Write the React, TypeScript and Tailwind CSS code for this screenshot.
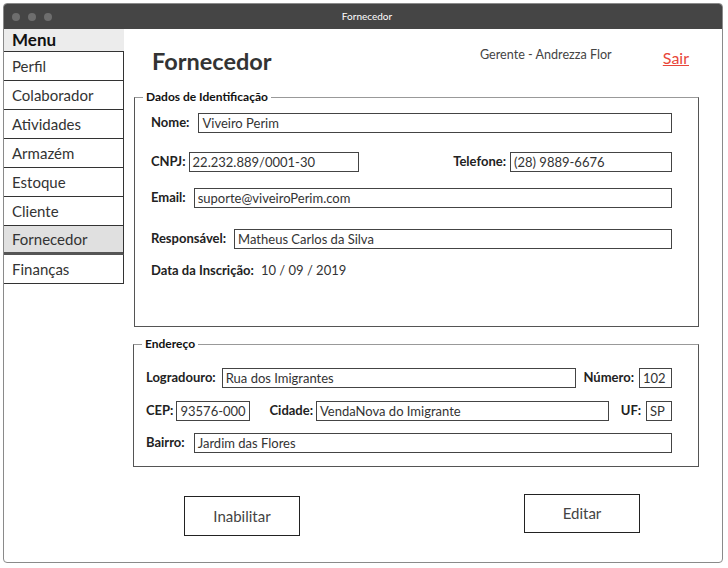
import React from 'react';

const menuItems = ['Perfil', 'Colaborador', 'Atividades', 'Armazém', 'Estoque', 'Cliente', 'Fornecedor', 'Finanças'];

const Field: React.FC<{ value: string; className?: string }> = ({ value, className = '' }) => (
  <div className={`h-[20px] border border-[#444] px-[3px] text-[13px] leading-[18px] text-[#333] whitespace-nowrap overflow-hidden ${className}`}>
    {value}
  </div>
);

const Label: React.FC<{ children: React.ReactNode; className?: string }> = ({ children, className = '' }) => (
  <span className={`text-[13px] font-bold text-[#222] whitespace-nowrap ${className}`}>{children}</span>
);

export default function App() {
  return (
    <div className="w-[728px] h-[568px] bg-white p-[3px]" style={{ fontFamily: 'Lato, "Open Sans", sans-serif' }}>
      <div className="w-[720px] h-[560px] border border-[#8a8a8a] rounded-[4px] overflow-hidden flex flex-col">
        {/* title bar */}
        <div className="h-[25px] bg-[#454545] flex items-center shrink-0">
          <div className="flex gap-[8px] pl-[8px]">
            <span className="w-[8px] h-[8px] rounded-full bg-[#6e6e6e]" />
            <span className="w-[8px] h-[8px] rounded-full bg-[#6e6e6e]" />
            <span className="w-[8px] h-[8px] rounded-full bg-[#6e6e6e]" />
          </div>
          <span className="flex-1 text-center text-white text-[10px] pr-[40px]">Fornecedor</span>
        </div>

        <div className="flex flex-1">
          {/* sidebar */}
          <div className="w-[120px] shrink-0">
            <div className="h-[22px] bg-[#ececec] pl-[8px] text-[17px] font-bold text-[#111] leading-[22px]">Menu</div>
            <div className="border-t border-[#333]">
              {menuItems.map((item) => (
                <div
                  key={item}
                  className={
                    item === 'Fornecedor'
                      ? 'h-[29px] pl-[8px] text-[15px] leading-[26px] text-[#333] bg-[#e0e0e0] border-r border-[#333] border-b-[3px] border-b-[#555]'
                      : 'h-[29px] pl-[8px] text-[15px] leading-[28px] text-[#333] border-r border-b border-[#333]'
                  }
                >
                  {item}
                </div>
              ))}
            </div>
          </div>

          {/* main */}
          <div className="flex-1 flex flex-col">
            <div className="flex items-start pt-[17px] h-[59px]">
              <h1 className="w-[356px] pl-[28px] text-[23.5px] font-bold text-[#333] leading-[30px]">Fornecedor</h1>
              <span className="text-[12.6px] text-[#444]">Gerente - Andrezza Flor</span>
              <span className="ml-auto mr-[33px] text-[16px] text-[#e8463a] underline">Sair</span>
            </div>

            {/* Dados de Identificação */}
            <fieldset className="ml-[10px] mr-[23px] h-[239px] border border-[#555] border-t-[#999] pl-[16px] pr-[26px]">
              <legend className="ml-[-8px] px-[3px] text-[12px] font-bold text-[#111]">Dados de Identificação</legend>
              <div className="flex items-center mt-[7px]">
                <Label>Nome:</Label>
                <Field value="Viveiro Perim" className="flex-1 ml-[9px]" />
              </div>
              <div className="flex items-center justify-between mt-[19px]">
                <div className="flex items-center">
                  <Label>CNPJ:</Label>
                  <Field value="22.232.889/0001-30" className="w-[170px] ml-[3px]" />
                </div>
                <div className="flex items-center">
                  <Label>Telefone:</Label>
                  <Field value="(28) 9889-6676" className="w-[162px] ml-[4px]" />
                </div>
              </div>
              <div className="flex items-center mt-[16px]">
                <Label>Email:</Label>
                <Field value="suporte@viveiroPerim.com" className="flex-1 ml-[8px]" />
              </div>
              <div className="flex items-center mt-[21px]">
                <Label>Responsável:</Label>
                <Field value="Matheus Carlos da Silva" className="flex-1 ml-[8px]" />
              </div>
              <div className="flex items-center mt-[12px]">
                <Label>Data da Inscrição:</Label>
                <span className="ml-[7px] text-[13px] text-[#333]">10 / 09 / 2019</span>
              </div>
            </fieldset>

            {/* Endereço */}
            <fieldset className="ml-[9px] mr-[23px] mt-[8px] h-[132px] border border-[#555] border-t-[#999] pl-[12px] pr-[26px]">
              <legend className="ml-[-4px] px-[3px] text-[12px] font-bold text-[#111]">Endereço</legend>
              <div className="flex items-center mt-[15px]">
                <Label>Logradouro:</Label>
                <Field value="Rua dos Imigrantes" className="flex-1 ml-[6px]" />
                <Label className="ml-[7px]">Número:</Label>
                <Field value="102" className="w-[33px] ml-[5px]" />
              </div>
              <div className="flex items-center mt-[13px]">
                <Label>CEP:</Label>
                <Field value="93576-000" className="w-[74px] ml-[3px]" />
                <Label className="ml-[19px]">Cidade:</Label>
                <Field value="VendaNova do Imigrante" className="flex-1 ml-[3px]" />
                <Label className="ml-[12px]">UF:</Label>
                <Field value="SP" className="w-[26px] ml-[5px]" />
              </div>
              <div className="flex items-center mt-[12px]">
                <Label>Bairro:</Label>
                <Field value="Jardim das Flores" className="flex-1 ml-[9px]" />
              </div>
            </fieldset>

            <div className="flex items-start mt-[27px]">
              <button className="ml-[60px] w-[116px] h-[40px] border border-[#222] text-[15px] text-[#444] mt-[2px]">
                Inabilitar
              </button>
              <button className="ml-[224px] w-[116px] h-[39px] border border-[#222] text-[15px] text-[#444]">
                Editar
              </button>
            </div>
          </div>
        </div>
      </div>
    </div>
  );
}
